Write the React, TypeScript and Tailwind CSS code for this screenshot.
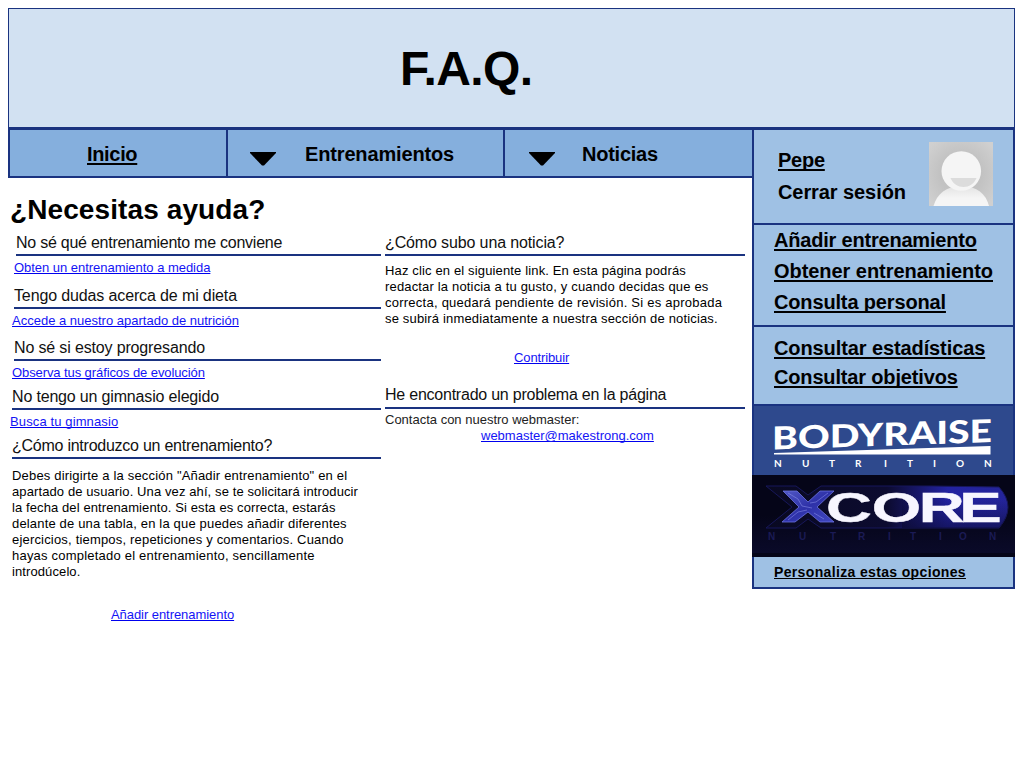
import type { ReactNode } from "react";

const link = "underline [text-decoration-skip-ink:none] underline-offset-1 decoration-1";
const strongLink = "underline [text-decoration-skip-ink:none] underline-offset-2 decoration-2";

function Question({ children, className = "" }: { children: ReactNode; className?: string }) {
  return (
    <h2 className={`h-[22px] border-b-2 border-[#1a3380] text-base leading-[18px] whitespace-nowrap text-[#111] ${className}`}>
      {children}
    </h2>
  );
}

function Answer({ children, className = "" }: { children: ReactNode; className?: string }) {
  return (
    <p className={`text-[13px] leading-4 whitespace-nowrap text-[#1414f5] decoration-[#0000ee] ${className}`}>
      <a className={link}>{children}</a>
    </p>
  );
}

function Arrow() {
  return (
    <svg width="26" height="14" viewBox="0 0 26 14" className="mt-[22px] shrink-0">
      <path d="M0 0H26V1L14 13.5H12L0 1Z" />
    </svg>
  );
}

function Avatar() {
  return (
    <svg width="64" height="64" viewBox="0 0 64 64">
      <defs>
        <radialGradient id="shade" cx="0.5" cy="0.5" r="0.65">
          <stop offset="0.5" stopColor="#c2c2c2" />
          <stop offset="1" stopColor="#d0d0d0" />
        </radialGradient>
        <linearGradient id="coat" x1="0" y1="0" x2="0" y2="1">
          <stop offset="0" stopColor="#e2e2e2" />
          <stop offset="0.6" stopColor="#f5f5f5" />
        </linearGradient>
      </defs>
      <rect width="64" height="64" fill="url(#shade)" />
      <path d="M4.500 64C8 52 17 44 32.500 44S57 52 60 64Z" fill="url(#coat)" />
      <circle cx="32.300" cy="29" r="19.800" fill="#f5f5f5" />
      <path d="M21.500 36H47.500C45 42 40 45 34.500 45S24 42 21.500 36Z" fill="#dcdcdc" />
    </svg>
  );
}

function BodyraiseLogo() {
  return (
    <svg width="259" height="69" viewBox="0 0 259 69" className="block bg-[#2e498d]">
      <g fill="#fff" fontFamily="Lato, sans-serif">
        <text x="18" y="44" fontSize="31.500" fontWeight="900" textLength="220" lengthAdjust="spacingAndGlyphs" transform="skewY(-1.9)">
          BODYRAISE
        </text>
        <path d="M20 47L236.500 40V48.500H20Z" />
        <text y="61" fontSize="10" fontWeight="700" x="20 48 75 101 130 153 179 202 230">
          NUTRITION
        </text>
      </g>
    </svg>
  );
}

function XcoreLogo() {
  return (
    <svg width="263" height="82" viewBox="0 0 263 82" className="-mx-0.5 block shrink-0 bg-[#050518]">
      <defs>
        <linearGradient id="capsule" x1="0" y1="0" x2="1" y2="0">
          <stop offset="0" stopColor="#090921" />
          <stop offset="0.5" stopColor="#0c0b30" />
          <stop offset="0.75" stopColor="#2222a0" />
          <stop offset="1" stopColor="#24249a" />
        </linearGradient>
        <linearGradient id="fade" x1="0" y1="0" x2="0" y2="1">
          <stop offset="0.3" stopColor="#080828" stopOpacity="0" />
          <stop offset="1" stopColor="#080828" stopOpacity="0.5" />
        </linearGradient>
        <linearGradient id="steel" x1="0" y1="0" x2="1" y2="1">
          <stop offset="0" stopColor="#5259c5" />
          <stop offset="0.5" stopColor="#2e31a8" />
          <stop offset="1" stopColor="#4048c0" />
        </linearGradient>
        <linearGradient id="floor" x1="0" y1="0" x2="0" y2="1">
          <stop offset="0" stopColor="#050518" />
          <stop offset="1" stopColor="#0a0a29" />
        </linearGradient>
      </defs>
      <rect y="40" width="263" height="38" fill="url(#floor)" />
      <path d="M14 11H44L56 20L69 11H180L247 12Q265 32 247 53H69L56 44L44 53H14L40 32Z" fill="url(#capsule)" stroke="#17175a" />
      <path d="M150 12H247Q265 32 247 53H150Z" fill="url(#fade)" />
      <path d="M31 16H45L56 27L68 16H82L65 32L82 47H68L56 37L43 47H30L47 32Z" fill="url(#steel)" stroke="#6b72e0" strokeWidth="0.8" />
      <path d="M36 18L46 24L50 31L60 33M76 18L64 27L58 28M36 45L46 37L55 35M62 38L72 44" fill="none" stroke="#9297ef" strokeWidth="1" opacity="0.5" />
      <text y="47" fill="#f7f6ff" stroke="#f7f6ff" strokeWidth="0.4" fontFamily="Liberation Sans, sans-serif" fontWeight="700" fontSize="43" transform="scale(1.480 1)" x="50 81 112.600 140">
        CORE
      </text>
      <text y="65" x="16 47 78 106 136 158 187 207 237" fill="#1b1b55" fontFamily="Liberation Sans, sans-serif" fontSize="10">
        NUTRITION
      </text>
    </svg>
  );
}

export default function App() {
  return (
    <div className="min-h-screen w-[1024px] bg-white pt-2 pl-2 font-['Liberation_Sans',sans-serif] text-black">
      <div className="w-[1007px]">
        <header className="flex h-[119px] border border-b-0 border-[#1a3380] bg-[#d2e1f2]">
          <h1 className="mt-[33px] ml-[391px] text-[48px] leading-[54px] font-bold tracking-[-0.6px]">F.A.Q.</h1>
        </header>
        <div className="flex items-start">
          <div className="w-[744px]">
            <nav className="flex h-[51px] border-t-3 border-b-2 border-l-2 border-[#1a3380] bg-[#85afdd] text-xl leading-6 font-bold">
              <div className="w-[218px] border-r-2 border-[#1a3380] pt-3 pl-[77px]">
                <a className={`${strongLink} tracking-[-0.33px]`}>Inicio</a>
              </div>
              <div className="flex w-[277px] border-r-2 border-[#1a3380] pl-[22px]">
                <Arrow />
                <span className="mt-3 ml-[29px] tracking-[-0.15px]">Entrenamientos</span>
              </div>
              <div className="flex pl-6">
                <Arrow />
                <span className="mt-3 ml-[27px] tracking-[-0.25px]">Noticias</span>
              </div>
            </nav>
            <main className="pt-[15px]">
              <h1 className="pl-0.5 text-[28px] leading-[34px] font-bold tracking-[0.1px]">¿Necesitas ayuda?</h1>
              <div className="mt-[7px] flex gap-1">
                <section className="w-[373px]">
                  <Question className="ml-2 tracking-[-0.25px]">No sé qué entrenamiento me conviene</Question>
                  <Answer className="mt-1 ml-1.5 tracking-[-0.03px]">Obten un entrenamiento a medida</Answer>
                  <Question className="mt-[11px] ml-1.5 tracking-[-0.13px]">Tengo dudas acerca de mi dieta</Question>
                  <Answer className="mt-1 ml-1">Accede a nuestro apartado de nutrición</Answer>
                  <Question className="mt-2.5 ml-1.5 tracking-[-0.15px]">No sé si estoy progresando</Question>
                  <Answer className="mt-1 ml-1 tracking-[-0.09px]">Observa tus gráficos de evolución</Answer>
                  <Question className="mt-[7px] ml-1 tracking-[-0.17px]">No tengo un gimnasio elegido</Question>
                  <Answer className="mt-1 ml-0.5 tracking-[0.12px]">Busca tu gimnasio</Answer>
                  <Question className="mt-[7px] ml-1 tracking-[-0.25px]">¿Cómo introduzco un entrenamiento?</Question>
                  <div className="mt-[9px] ml-1 flex flex-col text-[13px] leading-4 whitespace-nowrap">
                    <span className="tracking-[0.18px]">Debes dirigirte a la sección "Añadir entrenamiento" en el</span>
                    <span className="tracking-[0.105px]">apartado de usuario. Una vez ahí, se te solicitará introducir</span>
                    <span className="tracking-[0.1px]">la fecha del entrenamiento. Si esta es correcta, estarás</span>
                    <span className="tracking-[0.17px]">delante de una tabla, en la que puedes añadir diferentes</span>
                    <span className="tracking-[0.185px]">ejercicios, tiempos, repeticiones y comentarios. Cuando</span>
                    <span className="tracking-[0.21px]">hayas completado el entrenamiento, sencillamente</span>
                    <span className="tracking-[0.1px]">introdúcelo.</span>
                  </div>
                  <Answer className="mt-[27px] ml-[103px] tracking-[-0.06px]">Añadir entrenamiento</Answer>
                </section>
                <section className="w-[360px]">
                  <Question className="tracking-[-0.13px]">¿Cómo subo una noticia?</Question>
                  <div className="mt-[7px] flex flex-col text-[13px] leading-4 whitespace-nowrap">
                    <span className="tracking-[0.145px]">Haz clic en el siguiente link. En esta página podrás</span>
                    <span className="tracking-[0.165px]">redactar la noticia a tu gusto, y cuando decidas que es</span>
                    <span className="tracking-[0.245px]">correcta, quedará pendiente de revisión. Si es aprobada</span>
                    <span className="tracking-[0.165px]">se subirá inmediatamente a nuestra sección de noticias.</span>
                  </div>
                  <Answer className="mt-[23px] ml-[129px] tracking-[-0.12px]">Contribuir</Answer>
                  <Question className="mt-5 h-[23px] tracking-[-0.23px]">He encontrado un problema en la página</Question>
                  <p className="mt-[3px] text-[13px] leading-4 text-[#222]">Contacta con nuestro webmaster:</p>
                  <Answer className="ml-24">webmaster@makestrong.com</Answer>
                </section>
              </div>
            </main>
          </div>
          <aside className="w-[263px] border-2 border-t-3 border-[#1a3380] bg-[#9fc1e4] text-xl leading-6 font-bold whitespace-nowrap">
            <div className="flex h-[95px] justify-between border-b-2 border-[#1a3380] pt-3 pr-5 pl-6">
              <div className="flex flex-col items-start gap-2 pt-1.5">
                <a className={`${strongLink} tracking-[-0.25px]`}>Pepe</a>
                <span className="tracking-[-0.08px]">Cerrar sesión</span>
              </div>
              <Avatar />
            </div>
            <div className="flex h-[102px] flex-col items-start gap-[7px] border-b-2 border-[#1a3380] pt-[3px] pl-5">
              <a className={`${strongLink} tracking-[-0.2px]`}>Añadir entrenamiento</a>
              <a className={`${strongLink} tracking-[-0.05px]`}>Obtener entrenamiento</a>
              <a className={`${strongLink} tracking-[-0.15px]`}>Consulta personal</a>
            </div>
            <div className="flex h-[79px] flex-col items-start gap-[5px] border-b-2 border-[#1a3380] pt-[9px] pl-5">
              <a className={`${strongLink} tracking-[-0.1px]`}>Consultar estadísticas</a>
              <a className={`${strongLink} tracking-[-0.16px]`}>Consultar objetivos</a>
            </div>
            <BodyraiseLogo />
            <XcoreLogo />
            <div className="h-[30px] pt-[7px] pl-5 text-sm leading-4">
              <a className={`${link} tracking-[0.35px]`}>Personaliza estas opciones</a>
            </div>
          </aside>
        </div>
      </div>
    </div>
  );
}
